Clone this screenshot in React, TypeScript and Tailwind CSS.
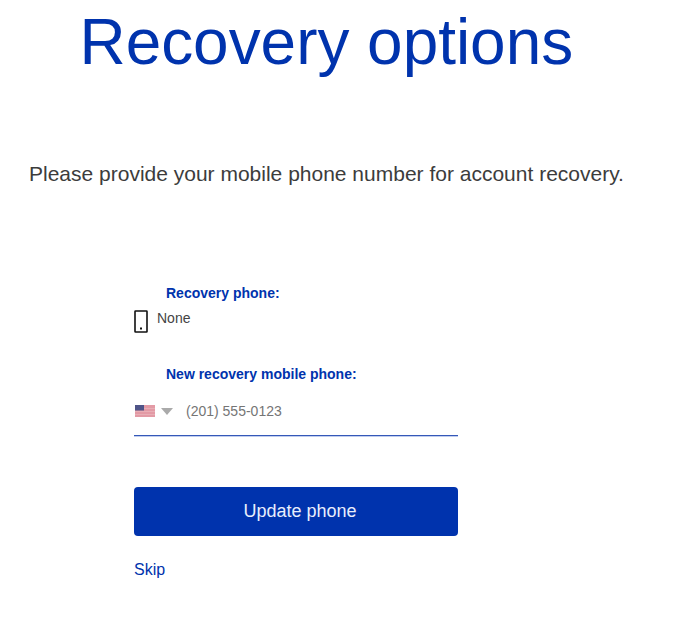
export default function App() {
  return (
    <main className="w-[678px] h-[618px] overflow-hidden bg-white font-['Liberation_Sans',Arial,sans-serif]">
      <h1 className="text-[63.9px] leading-[78px] text-[#0033ad] pl-[79.5px] pt-[3px]">Recovery options</h1>
      <p className="text-[21px] leading-[24px] text-[#3c3c3c] pl-[29px] mt-[81px]">
        Please provide your mobile phone number for account recovery.
      </p>

      <section className="w-[324px] ml-[134px] mt-[99px]">
        <div className="pl-[32px] text-[14px] leading-[16px] font-bold text-[#0033ad]">Recovery phone:</div>
        <div className="flex mt-[9px] h-[24px]">
          <svg width="14" height="23" viewBox="0 0 14 23">
            <rect x="1" y="1" width="12" height="21" rx="0.5" fill="none" stroke="#111" strokeWidth="1.6" />
            <rect x="6" y="17.5" width="2" height="2" fill="#111" />
          </svg>
          <span className="ml-[9px] text-[14px] leading-[16px] text-[#444]">None</span>
        </div>

        <div className="pl-[32px] mt-[32px] text-[14px] leading-[16px] font-bold text-[#0033ad]">New recovery mobile phone:</div>
        <div className="flex items-center h-[54px] pt-[5px] border-b border-[#3558b8] shadow-[0_1px_0_#c0cdee]">
          <svg width="20" height="12" viewBox="0 0 20 12" className="ml-[1px]">
            <rect width="20" height="12" fill="#e39aa5" />
            <rect y="3" width="20" height="1" fill="#e8aeb6" />
            <rect y="6" width="20" height="1" fill="#e8aeb6" />
            <rect y="9" width="20" height="1" fill="#e8aeb6" />
            <rect width="9" height="5.5" fill="#4f5488" />
          </svg>
          <svg width="12" height="7" viewBox="0 0 12 7" className="ml-[6px]">
            <path d="M0 0h12L6 7z" fill="#aaa" />
          </svg>
          <span className="ml-[13px] text-[14px] text-[#757575]">(201) 555-0123</span>
        </div>

        <button className="block w-full h-[49px] mt-[51px] pl-[8px] rounded-[4px] bg-[#0033ad] text-[18px] text-[#e8eefc]">
          Update phone
        </button>
        <a className="block mt-[25px] text-[16px] leading-[18px] text-[#0033ad]">Skip</a>
      </section>
    </main>
  );
}
